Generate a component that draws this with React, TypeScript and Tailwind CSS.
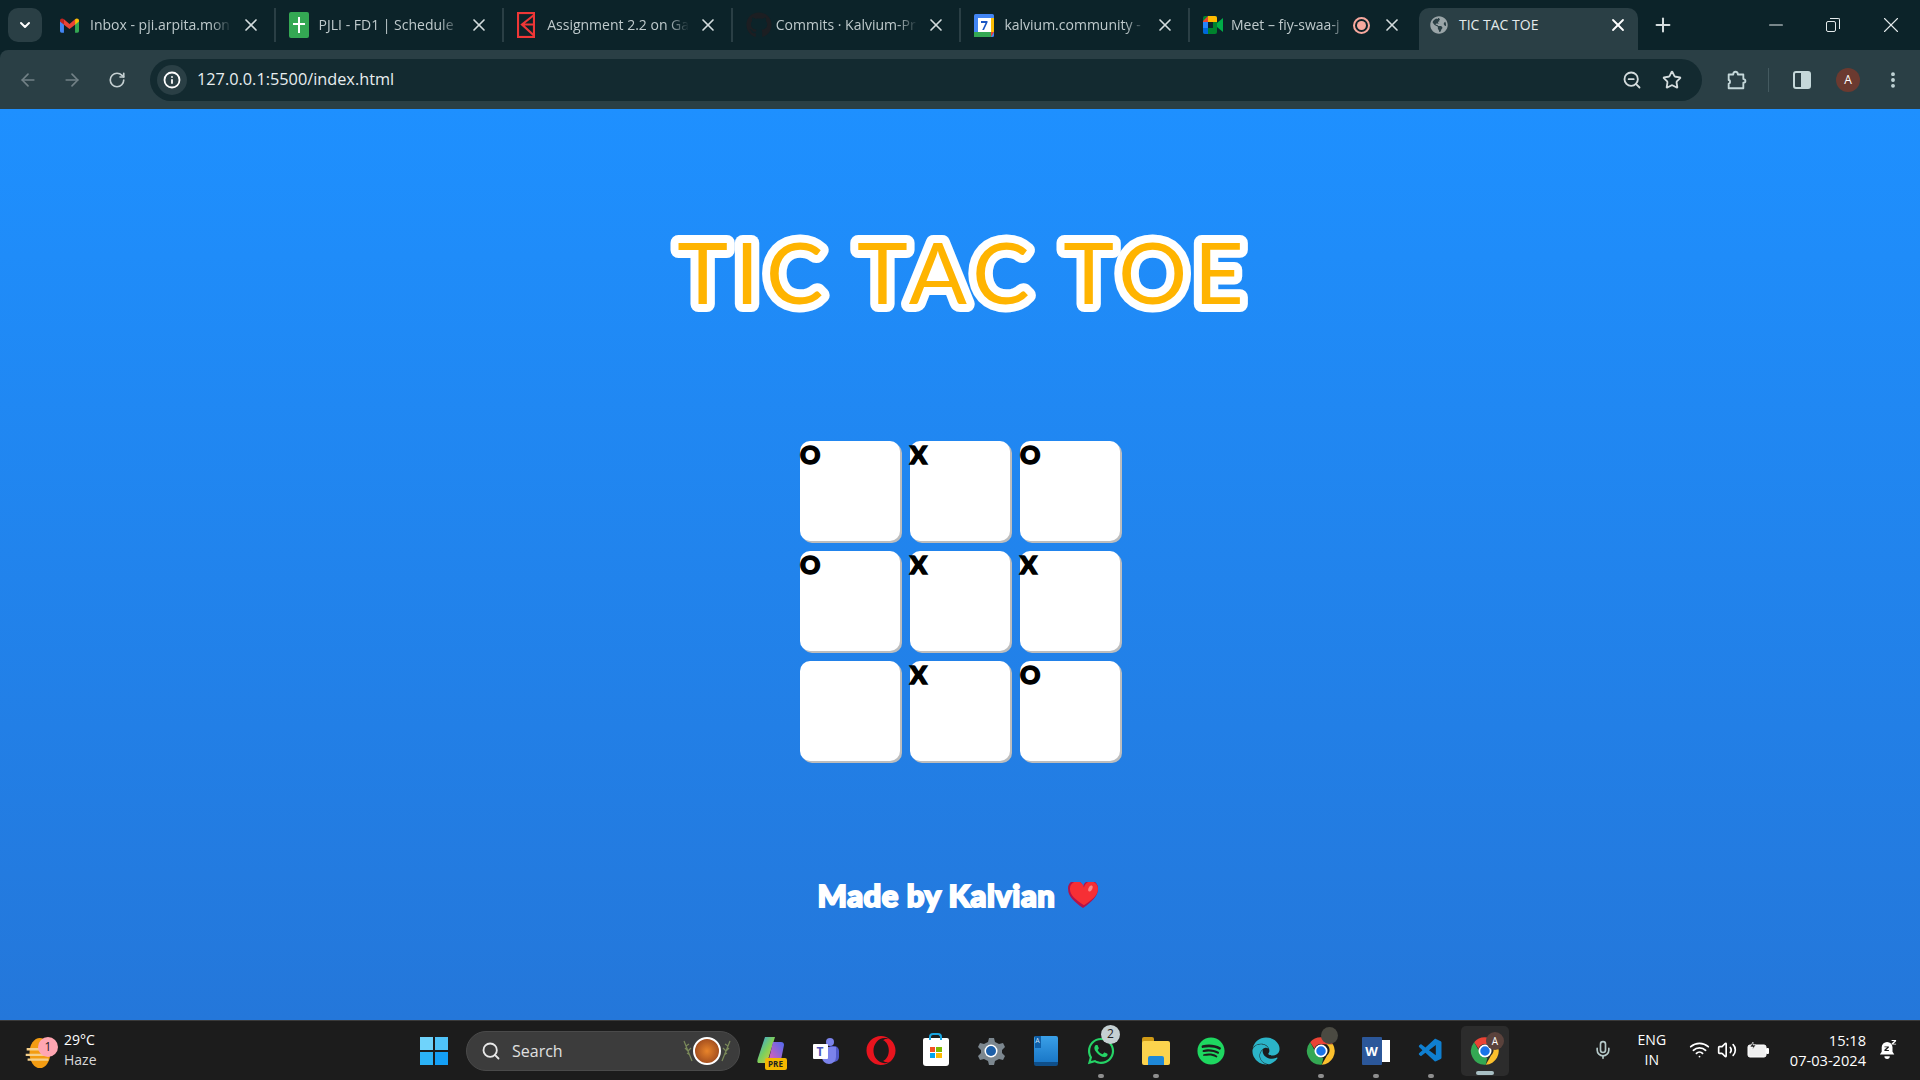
import {
  ArrowLeft,
  ArrowRight,
  ChevronDown,
  Info,
  Mic,
  Minus,
  MoreVertical,
  Plus,
  RotateCw,
  Search,
  Star,
  Volume2,
  Wifi,
  X,
  ZoomOut,
} from "lucide-react";
import { FaEdge, FaGithub, FaGlobeAmericas, FaOpera, FaSpotify, FaWhatsapp } from "react-icons/fa";
import { VscVscode } from "react-icons/vsc";

const GmailIcon = () => (
  <svg viewBox="0 0 24 18" className="w-[19px] h-[15px]">
    <path d="M0 3v13a2 2 0 0 0 2 2h3V7z" fill="#4285f4" />
    <path d="M24 3v13a2 2 0 0 1-2 2h-3V7z" fill="#34a853" />
    <path d="M5 8V1L12 7l7-6v7l-7 5.5z" fill="#ea4335" />
    <path d="M0 3c0-3 3-3.5 5-2v7L0 4z" fill="#c5221f" />
    <path d="M24 3c0-3-3-3.5-5-2v7l5-4z" fill="#fbbc04" />
  </svg>
);

const SheetsIcon = () => (
  <svg viewBox="0 0 20 26" className="w-[20px] h-[26px]">
    <rect width="20" height="26" rx="2" fill="#34a853" />
    <path d="M9 5h2v6h5v2h-5v8H9v-8H4v-2h5z" fill="#fff" />
  </svg>
);

const KalviumIcon = () => (
  <svg viewBox="0 0 18 26" className="w-[18px] h-[26px]" fill="none" stroke="#ef3737" strokeWidth="2.2">
    <rect x="1" y="1" width="16" height="24" />
    <path d="M17 3 5 12.500l12 11M5 12.500h12" />
  </svg>
);

const CalendarIcon = () => (
  <svg viewBox="0 0 20 23" className="w-[20px] h-[23px]">
    <rect width="20" height="23" rx="1.5" fill="#4285f4" />
    <rect x="4" y="4" width="13" height="14" fill="#fff" />
    <rect y="18" width="17" height="5" fill="#34a853" />
    <rect x="17" y="4" width="3" height="14" fill="#fbbc04" />
    <path d="M17 18h3l-3 5z" fill="#ea4335" />
    <path d="M7 7h6.5v1.5L10 16H8.2l3.3-7H7z" fill="#1a56c4" />
  </svg>
);

const MeetIcon = () => (
  <svg viewBox="0 0 20 18" className="w-[20px] h-[18px]">
    <rect x="0" y="0" width="14" height="18" rx="2" fill="#00832d" />
    <path d="M5 0h7a2 2 0 0 1 2 2v4H5z" fill="#ffba00" />
    <path d="M5 0 0 5v1h5z" fill="#ea4335" />
    <path d="M0 6h5v6H0z" fill="#2684fc" />
    <path d="M0 12h5v6H2a2 2 0 0 1-2-2z" fill="#0066da" />
    <rect x="5" y="6" width="5" height="6" fill="#0c2329" />
    <path d="m14 7 6-5v14l-6-5z" fill="#00ac47" />
  </svg>
);

const RecordIcon = () => (
  <div className="w-[17px] h-[17px] rounded-full border-2 border-[#f8a89e] flex items-center justify-center">
    <div className="w-[9px] h-[9px] rounded-full bg-[#f8a89e]" />
  </div>
);

const ChromeIcon = () => (
  <svg viewBox="0 0 24 24" className="w-[30px] h-[30px]">
    <path d="M12 1a11 11 0 0 1 9.530 5.500H12a5.500 5.500 0 0 0-5.200 3.700L3.300 5A11 11 0 0 1 12 1z" fill="#ea4335" />
    <path d="M21.530 6.500A11 11 0 0 1 12.600 23l4.200-7.500a5.500 5.500 0 0 0-.6-9z" fill="#fbc02d" />
    <path d="M12.600 23A11 11 0 0 1 3.300 5l4.400 7.800a5.500 5.500 0 0 0 6.200 4.500z" fill="#34a853" />
    <circle cx="12" cy="12" r="4.500" fill="#1a73e8" stroke="#fff" strokeWidth="1.400" />
  </svg>
);

const tabs = [
  { title: "Inbox - pji.arpita.mon", icon: <GmailIcon /> },
  { title: "PJLI - FD1 | Schedule", icon: <SheetsIcon /> },
  { title: "Assignment 2.2 on Ga", icon: <KalviumIcon /> },
  { title: "Commits · Kalvium-Pr", icon: <FaGithub className="text-[26px] text-[#1c1e22]" /> },
  { title: "kalvium.community -", icon: <CalendarIcon /> },
];

const Tab = ({ title, icon }: { title: string; icon: React.ReactNode }) => (
  <div className="w-[228.6px] h-[34px] flex items-center pl-[13px] pr-[13px] border-r-2 border-[#2a3f45] shrink-0">
    <div className="w-[30px] flex items-center">{icon}</div>
    <span className="w-[142px] -mt-[1px] overflow-hidden whitespace-nowrap text-[14px] text-[#bfcacc] [mask-image:linear-gradient(to_right,black_85%,transparent)]">
      {title}
    </span>
    <X className="ml-auto w-[20px] h-[20px] text-[#d4dcdd]" strokeWidth={2} />
  </div>
);

const TaskIcon = ({ children, dot }: { children: React.ReactNode; dot?: boolean }) => (
  <div className="relative w-[55px] h-[60px] flex items-center justify-center shrink-0">
    {children}
    {dot && <div className="absolute bottom-[3px] w-[6px] h-[4px] rounded-full bg-[#8e8e8e]" />}
  </div>
);

const taskCorner = "absolute flex items-center justify-center rounded-full";

export default function App() {
  const board = ["O", "X", "O", "O", "X", "X", "", "X", "O"];

  return (
    <div className="h-screen w-full overflow-hidden flex flex-col bg-[#0c2329] font-['Open_Sans',sans-serif]">
      {/* tab strip */}
      <div className="h-[50px] bg-[#0c2329] flex items-end shrink-0 relative">
        <div className="absolute left-[8px] top-[8px] w-[34px] h-[34px] rounded-[10px] bg-[#2a3f45] flex items-center justify-center">
          <ChevronDown className="w-[16px] h-[16px] text-white" strokeWidth={3} />
        </div>
        <div className="flex items-center h-[42px] ml-[47px] pb-[8px]">
          {tabs.map((t) => (
            <Tab key={t.title} title={t.title} icon={t.icon} />
          ))}
          <div className="w-[229px] h-[34px] flex items-center pl-[13px] pr-[17px] shrink-0">
            <div className="w-[28px]">
              <MeetIcon />
            </div>
            <span className="w-[116px] -mt-[1px] overflow-hidden whitespace-nowrap text-[14px] text-[#bfcacc] [mask-image:linear-gradient(to_right,black_85%,transparent)]">
              Meet – fiy-swaa-j
            </span>
            <div className="ml-[6px]">
              <RecordIcon />
            </div>
            <X className="ml-auto w-[20px] h-[20px] text-[#d4dcdd]" strokeWidth={2} />
          </div>
        </div>
        <div className="w-[219px] h-[42px] rounded-t-[10px] bg-[#2a3f45] flex items-center pl-[11px] pr-[10px] pb-[8px] shrink-0">
          <FaGlobeAmericas className="text-[18px] text-[#9aa5a8]" />
          <span className="ml-[11px] -mt-[1px] text-[14px] text-[#e4eaeb]">TIC TAC TOE</span>
          <X className="ml-auto w-[20px] h-[20px] text-white" strokeWidth={2.2} />
        </div>
        <div className="h-[42px] pb-[8px] flex items-center ml-[14px]">
          <Plus className="w-[22px] h-[22px] text-[#d4dcdd]" strokeWidth={2.2} />
        </div>
        <div className="absolute right-0 top-0 h-[50px] flex items-center pb-[1px] text-[#e4eaeb]">
          <Minus className="w-[22px] h-[22px]" strokeWidth={1.1} />
          <div className="relative ml-[39px] w-[14px] h-[14px]">
            <div className="absolute left-0 bottom-0 w-[10px] h-[11px] rounded-[2px] border border-[#e4eaeb]" />
            <div className="absolute right-0 top-0 w-[10px] h-[11px] rounded-tr-[2px] border-t border-r border-[#e4eaeb]" />
          </div>
          <X className="ml-[38px] mr-[16px] w-[26px] h-[26px]" strokeWidth={1} />
        </div>
      </div>

      {/* toolbar */}
      <div className="h-[59px] bg-[#2a3f45] rounded-tl-[8px] flex items-center shrink-0">
        <div className="w-[150px] flex items-center pl-[18px]">
          <ArrowLeft className="w-[20px] h-[20px] text-[#728186]" />
          <ArrowRight className="ml-[24px] w-[20px] h-[20px] text-[#728186]" />
          <RotateCw className="ml-[26px] w-[18px] h-[18px] text-[#c5d0d2]" strokeWidth={2.2} />
        </div>
        <div className="w-[1552px] h-[42px] rounded-full bg-[#132a30] flex items-center pl-[7px] pr-[20px]">
          <div className="w-[30px] h-[30px] rounded-full bg-[#2a3f45] flex items-center justify-center">
            <Info className="w-[18px] h-[18px] text-white" strokeWidth={2.4} />
          </div>
          <span className="ml-[10px] text-[16.3px] text-[#e8eeef]">127.0.0.1:5500/index.html</span>
          <ZoomOut className="ml-auto w-[20px] h-[20px] text-[#d4dcdd]" strokeWidth={2.2} />
          <Star className="ml-[20px] w-[20px] h-[20px] text-[#d4dcdd]" strokeWidth={2.2} />
        </div>
        <div className="flex-1 flex items-center pl-[23px]">
          <svg viewBox="0 0 24 24" className="w-[22px] h-[22px]" fill="none" stroke="#c5d8da" strokeWidth="2">
            <path d="M4 6h5c0-4 5-4 5 0h6v5c3 0 3 4 0 4v6H4v-5c2 0 2-4 0-4z" strokeLinejoin="round" />
          </svg>
          <div className="ml-[21px] w-px h-[24px] bg-[#445a60]" />
          <div className="ml-[24px] w-[18px] h-[18px] rounded-[3px] border-2 border-[#c5d8da] flex justify-end">
            <div className="w-[8px] bg-[#c5d8da]" />
          </div>
          <div className="ml-[25px] w-[24px] h-[24px] rounded-full bg-[#6b3a30] text-white text-[12px] flex items-center justify-center">
            A
          </div>
          <MoreVertical className="ml-[23px] w-[20px] h-[20px] text-[#c5d8da]" strokeWidth={2.6} />
        </div>
      </div>

      {/* page */}
      <main className="h-[911px] bg-[linear-gradient(#1e90ff,#2477da)] flex flex-col items-center pt-[109px] shrink-0">
        <h1 className="h-[110px] w-[640px]">
          <svg viewBox="0 0 640 110" className="w-[640px] h-[110px]">
            {/* stroke under the fill, round joins: gives the fat white outline */}
            <text
              x="324"
              y="86"
              textAnchor="middle"
              fontFamily="Lato, sans-serif"
              fontWeight="400"
              fontSize="86"
              letterSpacing="7"
              fill="#ffb400"
              stroke="#fff"
              strokeWidth="16"
              strokeLinejoin="round"
              paintOrder="stroke"
            >
              TIC TAC TOE
            </text>
          </svg>
        </h1>
        <div className="mt-[113px] grid grid-cols-[repeat(3,100px)] grid-rows-[repeat(3,100px)] gap-[10px]">
          {board.map((mark, i) => (
            <div
              key={i}
              className="bg-white rounded-[10px] shadow-[2px_2px_0_#bdbdbd] font-['Lato',sans-serif] font-black text-[25px] leading-[26px] text-black [-webkit-text-stroke:1.5px_black]"
            >
              {mark}
            </div>
          ))}
        </div>
        <div className="mt-[114px] mr-[4px] h-[40px] flex items-center text-white font-['Lato',sans-serif] font-black text-[31px] tracking-[0.5px] [-webkit-text-stroke:2px_white]">
          Made by Kalvian
          <svg viewBox="0 0 32 28" className="ml-[13px] w-[30px] h-[26px]">
            <path d="M16 28C6 21 0 15 0 8a8 8 0 0 1 16-3 8 8 0 0 1 16 3c0 7-6 13-16 20z" fill="#b3134a" />
            <path d="M17 25C8 19 2 14 2 8a7.500 7.500 0 0 1 15-2 7.500 7.500 0 0 1 15 2c0 6-6 11-15 17z" fill="#f62f35" />
            <ellipse cx="24" cy="7" rx="2" ry="3.500" fill="#f98a8a" transform="rotate(25 24 7)" />
          </svg>
        </div>
      </main>

      {/* taskbar */}
      <div className="h-[60px] bg-[#1c1c1c] border-t border-[#3a3a3a] flex items-center shrink-0 text-white">
        <div className="relative w-[420px] flex items-center pl-[25px] shrink-0">
          <svg viewBox="0 0 26 36" className="w-[26px] h-[34px] mt-[4px]">
            <ellipse cx="15" cy="18" rx="11" ry="16" fill="#f39c12" />
            <path d="M1 14h24M0 20h25M2 25h22" stroke="#f5cf8a" strokeWidth="2.500" />
          </svg>
          <div className={`${taskCorner} left-[38px] top-[5px] w-[20px] h-[20px] bg-[#ffa6b2] text-[#222] text-[12px]`}>1</div>
          <div className="ml-[13px] -mt-[2px] text-[14px] leading-[20px]">
            <div>29°C</div>
            <div className="text-[#d8d8d8]">Haze</div>
          </div>
        </div>
        <div className="w-[46px] shrink-0">
          <div className="w-[28px] h-[28px] grid grid-cols-2 grid-rows-2 gap-[2px]">
            <div className="bg-[#6fd3fb]" />
            <div className="bg-[#4fc3f9]" />
            <div className="bg-[#2bb2f6]" />
            <div className="bg-[#149ff5]" />
          </div>
        </div>
        <div className="w-[274px] h-[40px] rounded-full bg-[#3c3c3c] border border-[#4a4a4a] flex items-center pl-[14px] pr-[8px] shrink-0">
          <Search className="w-[20px] h-[20px] text-[#e8e8e8]" strokeWidth={2.2} />
          <span className="ml-[11px] text-[16px] text-[#e0e0e0]">Search</span>
          <div className="ml-auto flex items-center">
            <svg viewBox="0 0 10 24" className="w-[10px] h-[24px]" fill="none" stroke="#7b8a5a" strokeWidth="1.200">
              <path d="M1 2l8 20M3 7l3-2M5 12l3-3M2 9l3 3M4 14l3 2" />
            </svg>
            <div className="w-[28px] h-[28px] rounded-full border-2 border-white bg-[radial-gradient(#e8842a,#8a3a1a)]" />
            <svg viewBox="0 0 10 24" className="w-[10px] h-[24px]" fill="none" stroke="#7b8a5a" strokeWidth="1.200">
              <path d="M9 2L1 22M7 7L4 5M5 12L2 9M8 9l-3 3M6 14l-3 2" />
            </svg>
          </div>
        </div>
        <div className="flex items-center ml-[3px]">
          <TaskIcon>
            <div className="relative w-[28px] h-[30px]">
              <svg viewBox="0 0 28 30" className="w-[28px] h-[30px]">
                <defs>
                  <linearGradient id="copilotA" x1="0" y1="0" x2="1" y2="1">
                    <stop offset="0" stopColor="#2b9df5" />
                    <stop offset="0.5" stopColor="#7ed05a" />
                    <stop offset="1" stopColor="#f7c43b" />
                  </linearGradient>
                  <linearGradient id="copilotB" x1="1" y1="0" x2="0" y2="1">
                    <stop offset="0" stopColor="#4f6af0" />
                    <stop offset="1" stopColor="#f05fb0" />
                  </linearGradient>
                </defs>
                <path d="M8 1h10l-8 26H2C0 27 0 25 1 22z" fill="url(#copilotA)" />
                <path d="M16 6h8c2 0 3 1 3 3l-3 15c0 2-2 3-4 3h-9z" fill="url(#copilotB)" />
              </svg>
              <div className="absolute -bottom-[4px] -right-[2px] w-[22px] h-[12px] rounded-[2px] bg-[#f5b800] text-[#222] text-[8px] font-bold leading-[12px] text-center">
                PRE
              </div>
            </div>
          </TaskIcon>
          <TaskIcon>
            <div className="relative w-[26px] h-[26px]">
              <div className="absolute right-[5px] top-0 w-[8px] h-[8px] rounded-full bg-[#7b83eb]" />
              <div className="absolute right-0 top-[8px] w-[12px] h-[16px] rounded-[5px] bg-[#5059c9]" />
              <div className="absolute right-[3px] top-[9px] w-[14px] h-[17px] rounded-b-[7px] bg-[#7b83eb]" />
              <div className="absolute left-0 top-[6px] w-[15px] h-[15px] rounded-[1px] bg-white text-[#4b53bc] text-[12px] font-bold leading-[15px] text-center">
                T
              </div>
            </div>
          </TaskIcon>
          <TaskIcon>
            <FaOpera className="text-[30px] text-[#e8141e]" />
          </TaskIcon>
          <TaskIcon>
            <div className="relative w-[26px] h-[28px] rounded-b-[3px] rounded-t-[2px] bg-white mt-[3px] flex items-center justify-center">
              <div className="absolute -top-[5px] w-[13px] h-[7px] rounded-t-[4px] border-2 border-b-0 border-[#1aa5e0]" />
              <div className="grid grid-cols-2 gap-px w-[12px]">
                <div className="h-[5px] bg-[#f25022]" />
                <div className="h-[5px] bg-[#7fba00]" />
                <div className="h-[5px] bg-[#00a4ef]" />
                <div className="h-[5px] bg-[#ffb900]" />
              </div>
            </div>
          </TaskIcon>
          <TaskIcon>
            <svg viewBox="0 0 28 28" className="w-[28px] h-[28px]">
              <path d="M14 1l3 0 1 4 4 2 4-1 2 4-3 3v3l3 3-2 4-4-1-4 2-1 4h-5l-1-4-4-2-4 1-2-4 3-3v-3l-3-3 2-4 4 1 4-2 1-4z" fill="#7c878f" />
              <circle cx="14" cy="14" r="6.500" fill="#fff" />
              <circle cx="14" cy="14" r="5" fill="#1d5fa8" />
            </svg>
          </TaskIcon>
          <TaskIcon>
            <div className="relative w-[24px] h-[30px] rounded-[2px] bg-[linear-gradient(#3aa0e8,#1a78c8)] border-b-[4px] border-[#0f4f8a]">
              <div className="absolute left-[1px] top-0 w-[6px] h-[12px] bg-[#0f5fa8] text-[7px] leading-[10px] text-center text-[#cfe6fa]">
                A
              </div>
            </div>
          </TaskIcon>
          <TaskIcon dot>
            <FaWhatsapp className="text-[30px] text-[#25d366]" />
            <div className={`${taskCorner} left-[28px] top-[4px] w-[19px] h-[19px] bg-[#c5d0d2] text-[#222] text-[12px]`}>2</div>
          </TaskIcon>
          <TaskIcon dot>
            <div className="relative w-[28px] h-[28px]">
              <div className="absolute left-0 top-0 w-[12px] h-[6px] rounded-t-[2px] bg-[#d09a16]" />
              <div className="absolute inset-x-0 top-[4px] bottom-0 rounded-[2px] bg-[#fcd34d]" />
              <div className="absolute left-[6px] right-[6px] bottom-0 h-[9px] rounded-t-[2px] bg-[#1e88d8]" />
            </div>
          </TaskIcon>
          <TaskIcon>
            <FaSpotify className="text-[28px] text-[#1ed760]" />
          </TaskIcon>
          <TaskIcon>
            <FaEdge className="text-[28px] text-[#2bb4c8]" />
          </TaskIcon>
          <TaskIcon dot>
            <ChromeIcon />
            <div className="absolute left-[28px] top-[6px] w-[17px] h-[17px] rounded-full bg-[#4b4a42]" />
          </TaskIcon>
          <TaskIcon dot>
            <div className="relative w-[28px] h-[28px]">
              <div className="absolute right-0 top-[3px] w-[18px] h-[22px] bg-white" />
              <div className="absolute left-0 top-0 w-[20px] h-[28px] rounded-[1px] bg-[#2b579a] text-white text-[13px] font-bold leading-[28px] text-center">
                W
              </div>
            </div>
          </TaskIcon>
          <TaskIcon dot>
            <VscVscode className="text-[28px] text-[#0f7fd0]" />
          </TaskIcon>
          <div className="relative w-[48px] h-[50px] ml-[3px] rounded-[5px] bg-[#2c2c2c] flex items-center justify-center">
            <ChromeIcon />
            <div className="absolute left-[25px] top-[6px] w-[18px] h-[18px] rounded-full bg-[#5a423c] text-[10px] text-center leading-[18px]">
              A
            </div>
            <div className="absolute bottom-[1px] w-[18px] h-[4px] rounded-full bg-[#a9c0c4]" />
          </div>
        </div>
        <div className="ml-auto -mt-[2px] flex items-center pr-[23px]">
          <Mic className="w-[20px] h-[20px] text-[#b5c9c9]" />
          <div className="ml-[19px] w-[40px] text-center text-[14px] leading-[20px]">
            <div>ENG</div>
            <div>IN</div>
          </div>
          <Wifi className="ml-[17px] w-[21px] h-[21px]" />
          <Volume2 className="ml-[7px] w-[20px] h-[20px]" />
          <svg viewBox="0 0 22 16" className="ml-[10px] w-[22px] h-[16px]">
            <rect x="1" y="3" width="18" height="12" rx="2" fill="#f0f0f0" stroke="#fff" />
            <rect x="19" y="6" width="3" height="6" rx="1" fill="#fff" />
            <path d="M6 0 3 5h3L5 8l4-5H6z" fill="#1c1c1c" stroke="#fff" strokeWidth=".6" />
          </svg>
          <div className="ml-[21px] text-right text-[14.6px] leading-[20px]">
            <div>15:18</div>
            <div>07-03-2024</div>
          </div>
          <svg viewBox="0 0 20 22" className="ml-[13px] w-[18px] h-[20px]" fill="#fff">
            <path d="M9 2a6 6 0 0 0-6 6v5l-2 3h16l-2-3V8a6 6 0 0 0-6-6zM6 18h6a3 3 0 0 1-6 0z" />
            <path d="M6 7h5v1.300L8 11h3v1H6v-1.300L9 8H6z" fill="#1c1c1c" />
            <path d="M14 0h5v1.300L16 4h3v1h-5V3.700L17 1h-3z" />
          </svg>
        </div>
      </div>
    </div>
  );
}
